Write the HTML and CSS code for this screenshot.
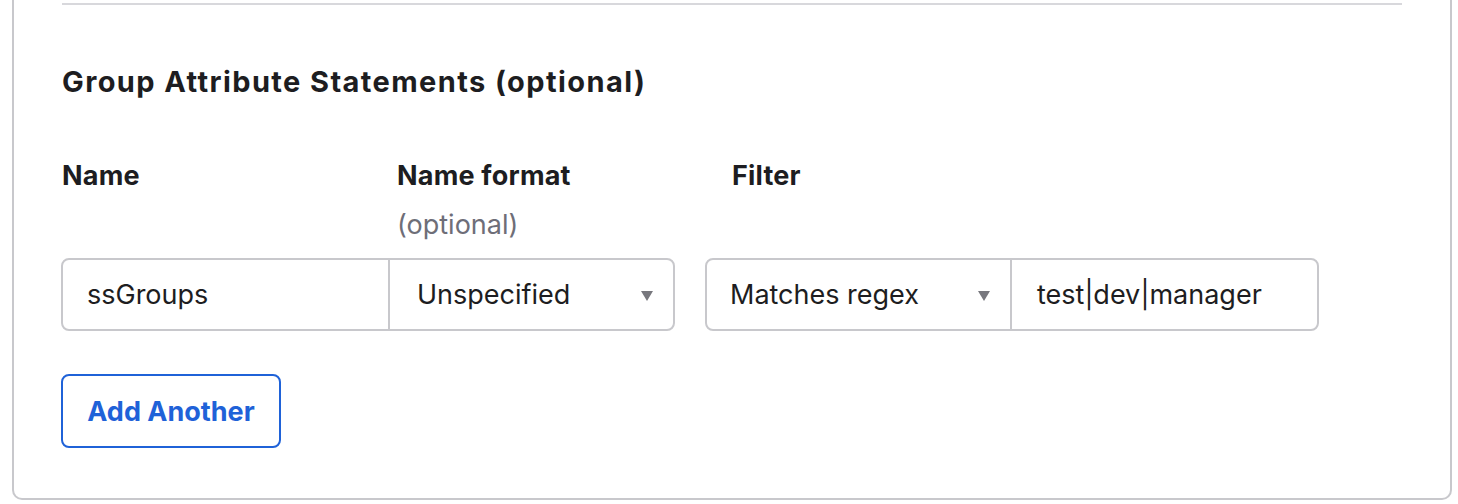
FILE: index.html
```html
<!DOCTYPE html>
<html>
<head>
<meta charset="utf-8">
<link rel="stylesheet" href="styles.css">
</head>
<body>
<div class="card">
  <div class="divider"></div>
  <h2 class="heading">Group Attribute Statements (optional)</h2>
  <div class="labels">
    <div class="label col-name">Name</div>
    <div class="label col-format">Name format<span class="hint">(optional)</span></div>
    <div class="label col-filter">Filter</div>
  </div>
  <div class="fields">
    <div class="group">
      <div class="field text name-field">ssGroups</div>
      <div class="field select format-field">Unspecified<span class="caret"></span></div>
    </div>
    <div class="group">
      <div class="field select filter-select">Matches regex<span class="caret"></span></div>
      <div class="field text filter-value">test|dev|manager</div>
    </div>
  </div>
  <button class="add-btn">Add Another</button>
</div>
</body>
</html>
```

FILE: styles.css
```css
* { box-sizing: border-box; }
html, body { margin: 0; padding: 0; background: #ffffff; }
body {
  font-family: Inter, "Noto Sans", "Liberation Sans", sans-serif;
  color: #1d1d21;
  width: 1458px;
  height: 504px;
  overflow: hidden;
}
.card {
  margin-left: 12px;
  width: 1440px;
  height: 500px;
  border: 2px solid #c8c8cc;
  border-top: none;
  border-radius: 0 0 10px 10px;
  padding: 3px 48px 0 47px;
}
.divider {
  height: 2px;
  background: #d8d8dc;
  margin-left: 1px;
}
.heading {
  margin: 57px 0 0 1px;
  font-size: 29px;
  font-weight: 700;
  line-height: 40px;
  letter-spacing: 1.4px;
}
.labels {
  display: flex;
  margin-top: 56px;
  margin-left: 1px;
}
.label {
  font-size: 27px;
  font-weight: 700;
  line-height: 36px;
  letter-spacing: 0.2px;
}
.col-name { width: 335px; }
.col-format { width: 335px; display: flex; flex-direction: column; }
.hint {
  font-weight: 400;
  color: #6e6e78;
  margin-top: 13px;
  line-height: 36px;
  letter-spacing: 0;
}
.fields {
  display: flex;
  gap: 30px;
  margin-top: 15px;
}
.group {
  display: flex;
  width: 614px;
  height: 73px;
  border: 2px solid #c8c8cc;
  border-radius: 8px;
}
.field {
  display: flex;
  align-items: center;
  font-size: 27px;
  height: 100%;
  padding-left: 24px;
  position: relative;
}
.name-field { width: 327px; border-right: 2px solid #c8c8cc; }
.format-field { flex: 1; padding-left: 27px; }
.filter-select { width: 305px; border-right: 2px solid #c8c8cc; padding-left: 23px; }
.filter-value { flex: 1; padding-left: 25px; }
.caret {
  position: absolute;
  right: 20px;
  top: 31px;
  width: 0;
  height: 0;
  border-left: 6px solid transparent;
  border-right: 6px solid transparent;
  border-top: 10px solid #78787e;
}
.add-btn {
  display: block;
  margin-top: 43px;
  width: 220px;
  height: 74px;
  border: 2px solid #1f62d8;
  border-radius: 8px;
  background: #ffffff;
  color: #1f62d8;
  font-family: Inter, "Noto Sans", sans-serif;
  font-size: 27px;
  font-weight: 700;
  padding: 0;
}
```
